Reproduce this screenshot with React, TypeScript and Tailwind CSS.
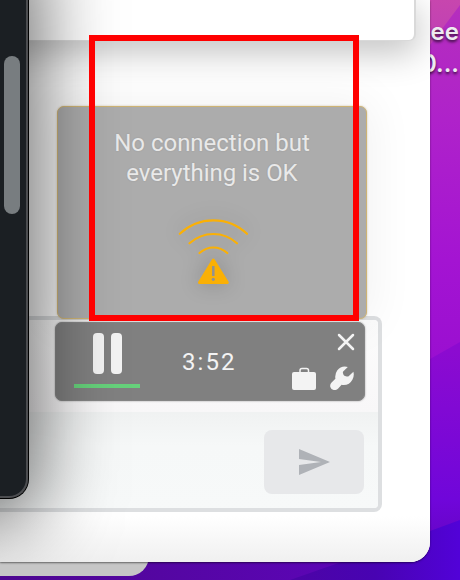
function Wallpaper() {
  return (
    <svg className="absolute inset-0" width="460" height="580" viewBox="0 0 460 580">
      <defs>
        <linearGradient id="upper" x1="0" y1="0" x2="0" y2="1">
          <stop offset="0" stopColor="#b52fbd" />
          <stop offset="0.3" stopColor="#af22ca" />
          <stop offset="0.65" stopColor="#a414d2" />
          <stop offset="1" stopColor="#960dd0" />
        </linearGradient>
        <linearGradient id="pink" x1="0" y1="0" x2="0" y2="1">
          <stop offset="0" stopColor="#c746ae" />
          <stop offset="1" stopColor="#b93abb" />
        </linearGradient>
        <linearGradient id="middle" gradientUnits="userSpaceOnUse" x1="0" y1="350" x2="0" y2="580">
          <stop offset="0" stopColor="#8c0bd0" />
          <stop offset="0.65" stopColor="#7006da" />
          <stop offset="1" stopColor="#5c04b4" />
        </linearGradient>
        <linearGradient id="lower" x1="0" y1="0" x2="1" y2="0">
          <stop offset="0" stopColor="#4c04a6" />
          <stop offset="0.5" stopColor="#4803b2" />
          <stop offset="1" stopColor="#5202d8" />
        </linearGradient>
        <linearGradient id="floor" x1="0" y1="0" x2="1" y2="0">
          <stop offset="0" stopColor="#4d0790" />
          <stop offset="1" stopColor="#5c05b6" />
        </linearGradient>
      </defs>
      <rect width="460" height="400" fill="url(#upper)" />
      <path d="M400 0H460V5L430 45L400 80Z" fill="url(#pink)" />
      <path d="M0 400H430V359L460 342V580H0Z" fill="url(#middle)" />
      <rect y="555" width="340" height="25" fill="url(#floor)" />
      <path d="M290 580L430 531L460 520V580Z" fill="url(#lower)" />
    </svg>
  );
}

function ConnectionNotice() {
  return (
    <section className="absolute left-[57px] top-[106px] flex h-[213px] w-[310px] flex-col items-center rounded-[7px] border border-[#cdb374] bg-[#acacac] pt-[21px] shadow-[0_0_2px_rgba(150,120,50,0.45),0_0_46px_6px_rgba(0,0,0,0.055)]">
      <p className="text-center text-[24px] leading-[30px] tracking-[-0.03px] text-[#e9e9e9] [text-shadow:0_0_2px_rgba(0,0,0,0.12)]">
        No connection but
        <br />
        everything is OK
      </p>
      <svg
        className="ml-[2px] mt-[27px] drop-shadow-[0_0_10px_rgba(0,0,0,0.2)]"
        width="76"
        height="72"
        viewBox="0 0 76 72"
        fill="none"
        stroke="#fab005"
        strokeWidth="2.2"
        strokeLinecap="round"
      >
        <path d="M4.800 18.800Q19 5.300 38.300 5.300Q58 5.300 72 18.800" />
        <path d="M14.500 28.300Q25 19 38.300 19Q52 19 62 28.300" />
        <path d="M24.500 38Q31 32.500 38.300 32.500Q46 32.500 52.300 38" />
        <path
          d="M38.300 45L52.300 67.500H24.500Z"
          fill="#fab005"
          strokeWidth="3"
          strokeLinejoin="round"
        />
        <path d="M38.300 51V61" stroke="#929292" strokeWidth="2.500" strokeLinecap="butt" />
        <circle cx="38.300" cy="64.300" r="1.600" fill="#929292" stroke="none" />
      </svg>
    </section>
  );
}

function PlayerBar() {
  return (
    <section className="absolute left-[55px] top-[322px] flex h-[79px] w-[310px] rounded-[7px] border border-[#858585] bg-[#808080] shadow-[0_0_2px_rgba(0,0,0,0.4)]">
      <div className="ml-[18px] flex w-[66px] flex-col items-center pt-[10px]">
        <div className="ml-px flex gap-[7px]">
          <span className="h-[41px] w-[11px] rounded-[4px] bg-[#f3f3f3]" />
          <span className="h-[41px] w-[11px] rounded-[4px] bg-[#f3f3f3]" />
        </div>
        <span className="mt-[10px] h-[4px] w-full bg-[#66d17b]" />
      </div>
      <time className="ml-[42px] mt-[24px] text-[24px] leading-[30px] tracking-[2.1px] text-[#f3f3f3]">
        3:52
      </time>
      <div className="ml-auto mr-[10px] flex flex-col items-end pt-[10px]">
        <svg className="-mr-px" width="18" height="18" viewBox="0 0 18 18" stroke="#f3f3f3" strokeWidth="2.500" strokeLinecap="round">
          <path d="M2 2L16 16M16 2L2 16" />
        </svg>
        <div className="mt-[15px] flex gap-[13px]">
          <svg width="26" height="26" viewBox="0 0 26 26" fill="#f3f3f3">
            <path d="M3 6H23Q25 6 25 8V22Q25 24 23 24H3Q1 24 1 22V8Q1 6 3 6Z" />
            <path d="M9 6V4.500Q9 2.500 11 2.500H15.500Q17.500 2.500 17.500 4.500V6" fill="none" stroke="#f3f3f3" strokeWidth="1.500" />
          </svg>
          <svg width="24" height="24" viewBox="0 0 24 24" fill="#f3f3f3">
            <path d="M17.800 0.900L13.400 5.200Q12.600 6 13 7.200L13.500 8.700Q13.900 9.700 15 10L16.800 10.500Q18 10.800 18.900 10L23.400 5.700Q24.500 9.800 22.500 13.500Q19.600 19 13.700 19Q12.600 19 11.600 18.800L8.200 22.500Q6.200 24.500 3.600 24Q1 23.500 0.300 21Q-0.300 18.400 1.600 16.400L5.400 12.800Q4.600 8.300 7.200 4.600Q11.200 -0.800 17.800 0.900Z" />
          </svg>
        </div>
      </div>
    </section>
  );
}

function Composer() {
  return (
    <section className="flex h-[196px] w-[382px] flex-col overflow-hidden rounded-br-[8px] rounded-tr-[8px] border-y-4 border-r-4 border-[#dddfe1] bg-[#fcfcfc]">
      <div className="h-[92px] bg-linear-to-b from-[#fcfcfc] to-[#f8f7f8]" />
      <div className="flex grow items-center justify-end bg-linear-to-b from-[#f0f2f2] via-[#f6f8f8] via-35% to-[#f7f9f9] pr-[14px] pt-[4px]">
        <button className="flex h-[64px] w-[100px] items-center justify-center rounded-[8px] bg-[#e7e8ea]">
          <svg width="32" height="28" viewBox="0 0 32 28" fill="#afb2b7">
            <path d="M1 1L32 14L1 27V17L23 14L1 11Z" />
          </svg>
        </button>
      </div>
    </section>
  );
}

function ChatWindow() {
  return (
    <main className="absolute left-0 top-0 h-[562px] w-[430px] overflow-hidden rounded-br-[20px] bg-white">
      <div className="flex h-full flex-col">
        <div className="h-[41px] w-[416px] rounded-br-[7px] border-b border-r-2 border-[#d9d9d9] bg-white shadow-[0_10px_34px_2px_rgba(0,0,0,0.24)]" />
        <div className="mt-[275px]">
          <Composer />
        </div>
        <div className="mt-[4px] grow bg-linear-to-b from-white to-[#f0f0f0]" />
      </div>
      <ConnectionNotice />
      <PlayerBar />
    </main>
  );
}

export default function App() {
  return (
    <div className="relative h-[580px] w-[460px] overflow-hidden font-['Roboto',sans-serif]">
      <Wallpaper />
      <p className="absolute right-[1px] top-[16px] text-right font-['Inter',sans-serif] text-[24px] font-semibold leading-[32px] text-[#eeeaf0] [text-shadow:0_2px_3px_rgba(0,0,0,0.7)]">
        ee
        <br />
        0...
      </p>
      <div className="absolute left-0 top-[540px] h-[36px] w-[149px] rounded-br-[20px] bg-[#c6c6c6]" />
      <div className="absolute left-0 top-0 h-[562px] w-[430px] rounded-br-[20px] shadow-[0_1px_2px_rgba(0,0,0,0.5)]" />
      <ChatWindow />
      <div className="pointer-events-none absolute left-0 top-0 h-[562px] w-[430px] overflow-hidden rounded-br-[20px]">
        <div className="absolute -left-[71px] -top-[60px] h-[550px] w-[96px] rounded-br-[20px] shadow-[0_20px_80px_12px_rgba(0,0,0,0.6)]" />
      </div>
      <aside className="absolute left-0 top-0 flex h-[499px] w-[29px] justify-start rounded-br-[20px] border-b border-r border-black bg-[#1b1f23]">
        <div className="flex h-full w-full rounded-br-[19px] border-b-2 border-r-2 border-[#4c4d50] pl-[4px] pt-[56px]">
          <div className="h-[158px] w-[16px] rounded-full bg-[#787d80]" />
        </div>
      </aside>
      <div className="absolute left-[89px] top-[35px] h-[286px] w-[270px] border-6 border-[#ff0000]" />
    </div>
  );
}
